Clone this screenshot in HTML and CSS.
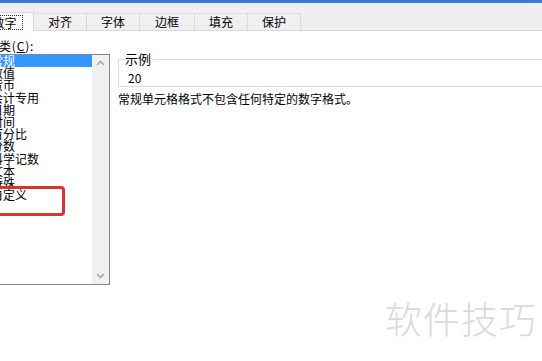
FILE: index.html
```html
<!DOCTYPE html>
<html>
<head>
<meta charset="utf-8">
<link rel="stylesheet" href="styles.css">
</head>
<body>
<div class="page">
  <div class="titlebar"></div>
  <div class="tabbar">
    <div class="tab sel"><span class="focus">数字</span></div>
    <div class="tab">对齐</div>
    <div class="tab">字体</div>
    <div class="tab">边框</div>
    <div class="tab">填充</div>
    <div class="tab">保护</div>
  </div>
  <div class="main">
    <div class="left">
      <div class="label">类(<u>C</u>):</div>
      <div class="listbox">
        <div class="items">
          <div class="item active">常规</div>
          <div class="item">数值</div>
          <div class="item">货币</div>
          <div class="item">会计专用</div>
          <div class="item">日期</div>
          <div class="item">时间</div>
          <div class="item">百分比</div>
          <div class="item">分数</div>
          <div class="item">科学记数</div>
          <div class="item">文本</div>
          <div class="item">特殊</div>
          <div class="item">自定义</div>
        </div>
        <div class="scrollbar">
          <svg width="17" height="17" viewBox="0 0 17 17"><path d="M5 10 L8.5 6.5 L12 10" fill="none" stroke="#a8a8a8" stroke-width="1.6"/></svg>
          <svg width="17" height="17" viewBox="0 0 17 17"><path d="M5 7 L8.5 10.5 L12 7" fill="none" stroke="#a8a8a8" stroke-width="1.6"/></svg>
        </div>
      </div>
    </div>
    <div class="right">
      <fieldset class="sample">
        <legend>示例</legend>
        <div class="value">20</div>
      </fieldset>
      <div class="desc">常规单元格格式不包含任何特定的数字格式。</div>
    </div>
  </div>
  <div class="mark"></div>
  <div class="watermark">软件技巧</div>
</div>
</body>
</html>
```
FILE: styles.css
```css
html, body {
  margin: 0;
  padding: 0;
  background: #ffffff;
}
body {
  font-family: "Noto Sans CJK SC", "Noto Sans", sans-serif;
  font-size: 12px;
  color: #000;
  width: 542px;
  height: 361px;
  overflow: hidden;
}
.page {
  position: relative;
  width: 542px;
  height: 361px;
  overflow: hidden;
}
.titlebar {
  height: 3px;
  background: #3e7bd1;
}
.tabbar {
  height: 27px;
  display: flex;
  align-items: flex-end;
  background: linear-gradient(#e9eff5 0px, #eef0f3 4px, #f2eef2 8px, #efefef 10px);
  border-bottom: 1px solid #d9d9d9;
}
.tab {
  width: 53px;
  height: 17px;
  box-sizing: border-box;
  border-top: 1px solid #dcdcdc;
  border-right: 1px solid #d9d9d9;
  background: #f0f0f0;
  display: flex;
  align-items: center;
  justify-content: center;
  line-height: 16px;
  color: #000;
}
.tab:nth-child(4) { width: 55px; }
.tab.sel {
  margin-left: -20px;
  width: 54px;
  height: 19px;
  margin-bottom: -1px;
  background: #fbfbfb;
  border: 1px solid #d9d9d9;
  border-bottom: none;
}
.focus {
  border: 1px dotted #333;
  padding: 0 5px 0 0;
  line-height: 13px;
  margin-top: 1px;
}
.main {
  display: flex;
  padding-top: 8px;
}
.left {
  width: 120px;
  margin-left: -10px;
  flex: none;
}
.label {
  padding-left: 9px;
  height: 13px;
  line-height: 13px;
  margin-bottom: 2px;
  letter-spacing: 0.8px;
}
.label u { text-decoration: underline; }
.listbox {
  height: 231px;
  box-sizing: border-box;
  border: 1px solid #858585;
  display: flex;
}
.items {
  flex: 1;
  padding-top: 0;
}
.item {
  height: 12.2px;
  line-height: 12.2px;
  white-space: nowrap;
}
.item.active {
  background: #3399ff;
  color: #fff;
}
.scrollbar {
  width: 17px;
  flex: none;
  background: #f0f0f0;
  display: flex;
  flex-direction: column;
  justify-content: space-between;
}
.scrollbar svg { display: block; }
.right {
  margin-left: 8px;
  flex: none;
  width: 440px;
}
.sample {
  margin: 13px 0 0 0;
  padding: 0 0 2px 9px;
  border: 1px solid #dcdcdc;
}
.sample legend {
  padding: 0 1px;
  margin-left: -4px;
  line-height: 14px;
  font-size: 13px;
}
.value {
  line-height: 13px;
  margin-top: 5px;
  font-size: 12px;
}
.desc {
  margin-top: 5px;
  line-height: 13px;
}
.mark {
  position: absolute;
  left: -10px;
  top: 186px;
  width: 75px;
  height: 30px;
  box-sizing: border-box;
  border: 3px solid #d4372c;
  border-radius: 4px;
}
.watermark {
  position: absolute;
  left: 385px;
  top: 296px;
  font-size: 37px;
  line-height: 44px;
  color: #dadada;
  font-weight: 300;
  letter-spacing: 1px;
}
```
